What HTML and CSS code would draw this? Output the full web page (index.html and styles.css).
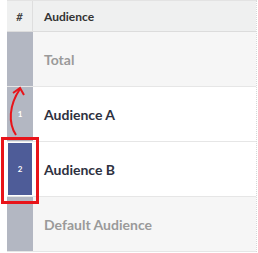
FILE: index.html
```html
<!DOCTYPE html>
<html>
<head>
<meta charset="utf-8">
<link rel="stylesheet" href="styles.css">
</head>
<body>
<div class="table">
  <div class="row head">
    <div class="idx">#</div>
    <div class="name">Audience</div>
  </div>
  <div class="row total">
    <div class="idx"></div>
    <div class="name muted">Total</div>
  </div>
  <div class="row body">
    <div class="idx">1</div>
    <div class="name">Audience A</div>
  </div>
  <div class="row body">
    <div class="idx active">2</div>
    <div class="name">Audience B</div>
  </div>
  <div class="row total last">
    <div class="idx"></div>
    <div class="name muted">Default Audience</div>
  </div>
  <div class="highlight"></div>
  <svg class="arrow" width="30" height="60" viewBox="0 0 30 60">
    <path d="M9 52 C 1 40, 2 22, 13 6" fill="none" stroke="#e8141a" stroke-width="2"/>
    <path d="M6 10 L13 5 L17 12" fill="none" stroke="#e8141a" stroke-width="2"/>
  </svg>
</div>
</body>
</html>
```
FILE: styles.css
```css
html, body { margin: 0; padding: 0; background: #fff; }
body { font-family: Lato, "Open Sans", sans-serif; }
.table {
  position: relative;
  margin-left: 7px;
  width: 249px;
  border-right: 1px dotted #d6d6d6;
  border-top: 1px solid #e3e3e3;
}
.row {
  display: grid;
  grid-template-columns: 26px 1fr;
  border-bottom: 1px solid #e6e6e6;
}
.head { height: 30px; background: #eff0f0; border-bottom: 1px solid #dcdcdc; }
.head .idx { background: #eff0f0; color: #444; font-style: italic; font-size: 11px; border-right: 1px solid #dedede; }
.head .name { color: #333; font-weight: 700; font-size: 12px; }
.idx {
  display: flex; align-items: center; justify-content: center;
  background: #b3b7c2; color: #fff; font-size: 8px; font-weight: 700;
}
.idx.active { background: #4e5c98; margin: 1px; }
.name {
  display: flex; align-items: center; padding-left: 11px;
  font-size: 14px; font-weight: 700; color: #2e3140;
}
.name.muted { color: #9a9a9a; }
.total, .body { height: 54px; }
.total .name { background: #f6f6f6; }
.body .name { background: #fff; }
.highlight {
  position: absolute; left: -6px; top: 136px;
  width: 32px; height: 61px;
  border: 3px solid #e8141a;
}
.arrow { position: absolute; left: 0; top: 82px; }
```
